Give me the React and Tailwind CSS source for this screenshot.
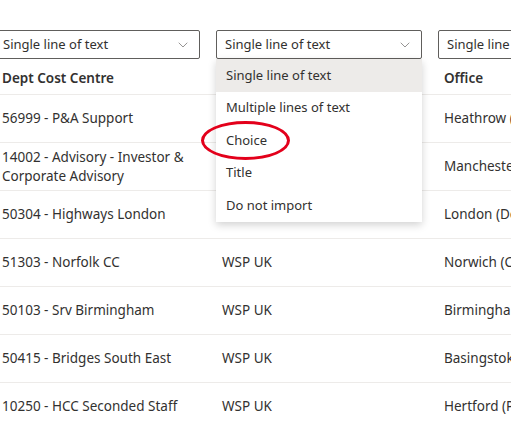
import { ChevronDown } from "lucide-react";

const rows = [
  ["56999 - P&A Support", "", "Heathrow (Ter"],
  ["14002 - Advisory - Investor & Corporate Advisory", "", "Manchester (S"],
  ["50304 - Highways London", "", "London (Dev"],
  ["51303 - Norfolk CC", "WSP UK", "Norwich (Cou"],
  ["50103 - Srv Birmingham", "WSP UK", "Birmingham (C"],
  ["50415 - Bridges South East", "WSP UK", "Basingstoke (M"],
  ["10250 - HCC Seconded Staff", "WSP UK", "Hertford (Pe"],
];

const options = ["Single line of text", "Multiple lines of text", "Choice", "Title", "Do not import"];

function Select() {
  return (
    <div className="h-[29px] w-[206px] border border-[#605e5c] rounded-[2px] bg-white flex items-center justify-between pl-2 pr-2 text-[13px] text-[#323130] whitespace-nowrap overflow-hidden">
      <span>Single line of text</span>
      <ChevronDown size={16} strokeWidth={1} className="text-[#605e5c] shrink-0" />
    </div>
  );
}

export default function App() {
  return (
    <div className="relative w-[511px] h-[424px] overflow-hidden bg-white text-[#323130]" style={{ fontFamily: '"Noto Sans", "Open Sans", sans-serif' }}>
      <div className="ml-[-6px] w-[700px] pt-[30px]">
        {/* dropdown row */}
        <div className="flex gap-4">
          <Select />
          <Select />
          <Select />
        </div>

        {/* header */}
        <div className="flex gap-4 h-[32px] items-center border-b border-[#edebe9] text-[13.5px] font-semibold mt-[4px]">
          <div className="w-[206px] pl-2">Dept Cost Centre</div>
          <div className="w-[206px] pl-[6px]"></div>
          <div className="w-[206px] pl-[6px]">Office</div>
        </div>

        {rows.map((r, i) => (
          <div key={i} className="flex gap-4 h-[48px] items-center border-b border-[#edebe9] text-[13.5px] leading-[19px]">
            <div className="w-[206px] pl-2 pr-1">{r[0]}</div>
            <div className="w-[206px] pl-[6px]">{r[1]}</div>
            <div className="w-[206px] pl-[6px] whitespace-nowrap">{r[2]}</div>
          </div>
        ))}
      </div>

      {/* open dropdown menu */}
      <div className="absolute left-[216px] top-[59px] w-[206px] bg-white shadow-[0_3px_8px_rgba(0,0,0,0.18)] text-[13px]">
        {options.map((o, i) => (
          <div key={o} className={`h-[32.5px] flex items-center pl-[10px] ${i === 0 ? "bg-[#edebe9]" : ""}`}>
            {o}
          </div>
        ))}
      </div>

      {/* red annotation ellipse */}
      <div className="absolute left-[201px] top-[121px] w-[89px] h-[39px] rounded-[50%] border-[3px] border-[#e3001b]" />
    </div>
  );
}
